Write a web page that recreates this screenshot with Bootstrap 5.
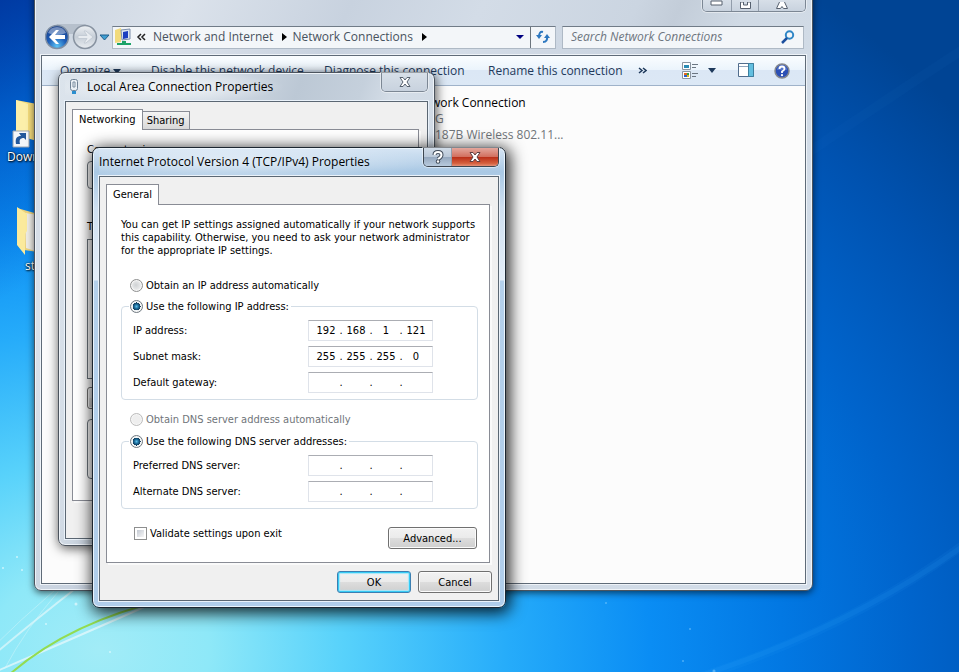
<!DOCTYPE html>
<html lang="en">
<head>
<meta charset="utf-8">
<meta name="viewport" content="width=device-width, initial-scale=1">
<title>Network Connections</title>
<link href="https://cdn.jsdelivr.net/npm/bootstrap@5.3.0/dist/css/bootstrap.min.css" rel="stylesheet">
<style>
body{font:12px/16px "Open Sans","Noto Sans",sans-serif;color:#000;margin:0}
.desktop{height:100vh;background:
 linear-gradient(150deg,rgba(0,45,150,.75) 0,rgba(0,60,170,.45) 100px,rgba(0,60,170,0) 260px),
 radial-gradient(ellipse 1100px 860px at 100px 650px,#a2ecf7 0,#8ee8f8 10%,#58d2fb 22%,#26acfa 37%,#0a8df4 50%,#0278e3 62%,#0064cc 74%,#0052b0 88%,#004494 100%)}
.wallpaper{position:absolute;inset:0;width:100%;height:100%}
.shortcut{position:absolute;color:#fff;text-shadow:1px 1px 2px #000,0 0 2px #000}
.win{position:absolute;border:1px solid #4c545e;border-radius:7px;background:#cbd5e1;box-shadow:inset 0 0 0 1px #eef3f8,0 2px 7px rgba(0,0,0,.6);padding:0 6px 6px}
.explorer{left:34px;right:146px;top:-30px;bottom:81px;background:linear-gradient(115deg,#c9d3df 0,#dbe2eb 150px,#c8d2df 300px,#d3dce7 420px,#cbd5e1 560px,#c3cdd9 600px,#d0dae5 660px,#d3dde9 100%)}
.props{left:58px;top:72px;width:377px;height:474px;background:linear-gradient(110deg,#dce4ec 0,#d3dce6 150px,#bcc8d5 230px,#c5d0dc 290px,#d4dde7 320px,#cad5e2 100%);box-shadow:inset 0 0 0 1px #eef3f8,1px 2px 12px rgba(0,0,0,.7)}
.ipv4{left:92px;top:147px;width:414px;height:461px;border-color:#1c2630;background:linear-gradient(#d6e5f4 0,#a9c8e4 24px,#cfe0f1 60px,#e4eef8 132px,#b4d0eb 133px,#b0cdea 100%);box-shadow:inset 0 0 0 1px #eaf4fc,2px 3px 16px 2px rgba(0,0,0,.85)}
.caption-row{height:28px}
.ipv4 .caption-row{background:radial-gradient(ellipse 200px 20px at 130px 14px,rgba(255,255,255,.55),rgba(255,255,255,0))}
.props .caption-row{background:radial-gradient(ellipse 120px 16px at 100px 14px,rgba(255,255,255,.7),rgba(255,255,255,0))}
.client{border:1px solid #5b6773;background:#f0f0f0;box-shadow:0 0 0 1px #eaf2fa}
.cap-btns{align-self:flex-start;border:1px solid #7c8794;border-top:0;border-radius:0 0 5px 5px;overflow:hidden;box-shadow:0 0 0 1px rgba(255,255,255,.45)}
.cap-btns button{border:0;padding:0;background:linear-gradient(#d7dfe8,#c8d2de);border-left:1px solid #929dab}
.cap-btns button:first-child{border-left:0}
.ipv4 .cap-btns{border-color:#3d4650}
.ipv4 .help{background:linear-gradient(#d0dbe7 0,#bac8d8 48%,#94a7bd 50%,#b8cadd 100%)}
.ipv4 .close{background:linear-gradient(#e3a79d 0,#d2705f 48%,#b92d17 50%,#d5603e 85%,#e59077 100%)}
.nav-row{height:30px;margin-bottom:3px;padding:0 2px 0 4px}
.address{background:#f3f6f9;border:1px solid #aeb9c5;border-top-color:#707b87;height:23px;color:#48525e}
.address a{color:inherit;text-decoration:none}
.search input{border:0;background:none;outline:0;font-style:italic;color:#6d757e;padding:0}
.search input::placeholder{color:#6d757e;opacity:1}
.plain{border:0;background:none;padding:0;line-height:16px;color:inherit}
.files{border:1px solid #5f6b78;background:#fcfcfc;box-shadow:0 0 0 1px #eef3f8}
.toolbar{height:30px;background:linear-gradient(#fafdff 0,#ebf4fc 48%,#dbe7f5 50%,#dce8f5 100%);border-bottom:1px solid #9fb2c9;color:#1e395b}
.results{padding:9px 0 0 389px}
.muted{color:#70757a}
.tabs button{border:1px solid #898c95;border-bottom:0;padding:0 6px;color:#000}
.tabs .on{background:#fff;height:21px;margin-bottom:-1px;position:relative;line-height:18px}
.tabs .off{background:linear-gradient(#f4f4f4,#d8d8d8);height:18px;margin-left:-1px;padding:0 4px;line-height:18px}
.pane{border:1px solid #898c95;background:#fff;box-shadow:2px 2px 0 #fafafa}
.dlg,.dlg button,.dlg input,.dlg label{font-family:"DejaVu Sans Condensed","DejaVu Sans",sans-serif;font-size:11px;line-height:13px}
.group{border:1px solid #d3dde6;border-radius:4px;padding:0 0 6px 7px;margin:0 11px 0 14px;min-width:0}
.group legend{float:none;width:auto;margin:0;padding:0 2px 0 1px;font-size:11px;line-height:14px}
.group legend,.choice{display:flex;align-items:center;gap:3px}
.fields{padding:7px 44px 0 4px;display:grid;gap:5px}
.ip{border:1px solid #dfe3ea;border-top-color:#abadb3;height:21px;padding:0 4px 0 5px;background:#fff}
.ip input{width:24px;border:0;padding:0;text-align:center;background:none;outline:0}
.ip span{width:6px;text-align:center}
input[type=radio],input[type=checkbox]{appearance:none;width:13px;height:13px;margin:0;flex:none}
input[type=radio]{border:1px solid #8e8f8f;border-radius:50%;background:radial-gradient(circle at 5px 5px,#cfd2d4,#f4f4f4 80%);box-shadow:inset 0 0 0 1px #f6f6f6}
input[type=radio]:checked{border-color:#6f7880;background:radial-gradient(circle at 50% 50%,#5cc0e8 0,#1f6f9e 2px,#0b3350 4px,#f0f4f6 4px)}
input[type=radio]:disabled{border-color:#bcbcbc;background:#eee}
input[type=checkbox]{border:1px solid #8e8f8f;background:linear-gradient(135deg,#c4cad3,#f6f6f6) content-box #f4f4f4;padding:2px}
.push{border:1px solid #707070;border-radius:3px;height:22px;width:74px;padding:0;background:linear-gradient(#f2f2f2 0,#ebebeb 49%,#dddddd 50%,#cfcfcf 100%);box-shadow:inset 0 0 0 1px #fbfbfb}
.push.primary{border-color:#3c7fb1;box-shadow:inset 0 0 0 1px #36cbf5,inset 0 0 1px 2px #a6e6f8}
.push.wide{width:89px}
</style>
</head>
<body>
<main class="desktop position-relative overflow-hidden">
<svg class="wallpaper" viewBox="0 0 959 672" preserveAspectRatio="none" aria-hidden="true">
 <g fill="none" stroke-linecap="round">
  <path d="M-10 674Q70 640 160 600" stroke="#e2f8fb" stroke-width="2" opacity=".8"/>
  <path d="M-10 658Q30 624 80 585" stroke="#e2f8fb" stroke-width="2" opacity=".7"/>
  <path d="M-10 650Q20 620 55 590M5 668Q25 630 58 592" stroke="#e2f8fb" opacity=".4"/>
  <path d="M10 674Q70 622 165 600" stroke="#93dc50" stroke-width="2"/>
  <path d="M690 680Q850 630 970 540" stroke="#3fb0ff" stroke-width="9" opacity=".07"/>
  <path d="M690 679Q850 629 970 541" stroke="#3fb0ff" stroke-width="5" opacity=".1"/>
  <path d="M812 150Q900 90 970 45" stroke="#3b8fe0" stroke-width="10" opacity=".04"/>
 </g>
 <g fill="#e5fbff" opacity=".75"><circle cx="76" cy="604" r="1.5"/><circle cx="46" cy="624" r="1"/><circle cx="22" cy="570" r="1"/><circle cx="3" cy="568" r="1"/><circle cx="110" cy="652" r="1"/><circle cx="17" cy="557" r="1"/></g>
 <g fill="#8fd4ff" opacity=".5"><circle cx="606" cy="603" r="1"/><circle cx="690" cy="629" r="1"/><circle cx="683" cy="661" r="1"/><circle cx="714" cy="671" r="1.500"/></g>
</svg>
<div class="shortcut" style="left:7px;top:99px">
 <svg class="d-block ms-1" width="40" height="50" aria-hidden="true"><path d="M5 1 26 5V42L5 36Z" fill="#f5dc7c"/><path d="M5 1 17 5V39L5 36Z" fill="#fcefaa"/><path d="M2 32h16v16H2Z" fill="#f4f6f9" stroke="#9aa4b0"/><path d="M5 45c-1-6 1-8 5-8l-2-3h7v7l-2-2c-4 0-5 2-4 6Z" fill="#23589c"/></svg>
 <div>Downloads</div>
</div>
<div class="shortcut" style="left:13px;top:206px">
 <svg class="d-block" width="40" height="52" aria-hidden="true"><path d="M4 2 25 8V46L11 44Z" fill="#ecd27c"/><path d="M12 7 25 9V46L13 42Z" fill="#eceae5"/><path d="M4 1 14 8V25L12 28V49L4 39Z" fill="#fbea9c"/></svg>
 <div class="ps-2 ms-1">st</div>
</div>

<section class="win explorer d-flex flex-column" aria-label="Network Connections">
 <header class="d-flex justify-content-end" style="height:51px;padding-top:29px">
  <div class="cap-btns d-flex">
   <button class="pb-1" style="width:28px;height:11px" aria-label="Minimize"><svg class="d-block mx-auto" width="14" height="7"><path d="M1 1h11v4H1Z" fill="#fff" stroke="#56606e"/></svg></button>
   <button style="width:27px;height:11px" aria-label="Maximize"><svg class="d-block mx-auto" width="13" height="8"><path d="M1.500 0v6.500h10V0h-3v3h-4V0Z" fill="#fff" stroke="#56606e"/></svg></button>
   <button style="width:47px;height:11px" aria-label="Close"><svg class="d-block mx-auto" width="14" height="8"><path d="M4.500 0 1.500 6.500h4l1.500-2 1.500 2h4L9.500 0" fill="#fff" stroke="#56606e"/></svg></button>
  </div>
 </header>
 <nav class="nav-row d-flex align-items-center">
  <svg width="67" height="30" class="flex-shrink-0" aria-hidden="true">
   <defs><radialGradient id="b" cx=".5" cy=".9" r=".9"><stop offset="0" stop-color="#5cc4f6"/><stop offset=".45" stop-color="#1f5fb8"/><stop offset="1" stop-color="#173c86"/></radialGradient><linearGradient id="f" x2="0" y2="1"><stop offset="0" stop-color="#eef1f4"/><stop offset=".5" stop-color="#c6ced7"/><stop offset="1" stop-color="#e9edf1"/></linearGradient></defs>
   <path d="M12 2H40q6 3 5 10H8Z" fill="#b6c0cc"/>
   <circle cx="12" cy="15" r="11.500" fill="url(#b)" stroke="#7f8fa4" stroke-width="1.500"/><path d="M3 11a9.500 9 0 0 1 18 0q-9 4-18 0Z" fill="#fff" opacity=".4"/>
   <path d="M4 15l7-7h3l-4 5h10v4H10l4 5h-3Z" fill="#fff"/>
   <circle cx="40" cy="15" r="11.500" fill="url(#f)" stroke="#8792a0" stroke-width="1.500"/><path d="M48 15l-7-6h-2l3 4.500h-9v3h9l-3 4.500h2Z" fill="#e8ecf0" stroke="#c4ccd5"/>
   <path d="M55 13h9l-4.500 5Z" fill="#3f9fd3" stroke="#1f5d8b"/>
  </svg>
  <div class="address d-flex align-items-center flex-grow-1">
   <svg width="20" height="19" class="flex-shrink-0" style="margin-left:2px" aria-hidden="true"><path d="M0 2 6 0V14L0 15Z" fill="#f2db7c"/><path d="M6 2 15 1V11L7 12Z" fill="#dce5f0" stroke="#7c8eaa"/><path d="M8 4l5-1v7l-5 1Z" fill="#1c3fc0"/><path d="M7 13h4v2h5v2H2v-2h5Z" fill="#1ca368"/></svg>
   <svg width="11" height="8" class="flex-shrink-0" style="margin:0 6px 0 1px" fill="none" stroke="#222" stroke-width="1.500" aria-hidden="true"><path d="M5 1 2 4l3 3M9 1 6 4l3 3"/></svg>
   <a href="#">Network and Internet</a><span class="mx-1 ps-1 text-black"><svg class="d-block" width="7" height="8"><path d="M1 0v8l5-4Z"/></svg></span>
   <a href="#">Network Connections</a><span class="mx-1 ps-1 text-black"><svg class="d-block" width="7" height="8"><path d="M1 0v8l5-4Z"/></svg></span>
   <button class="plain ms-auto me-1" aria-label="Previous locations"><svg width="12" height="6" class="d-block"><path d="M2 1h8L6 5Z" fill="#000080"/></svg></button>
   <button class="plain border-start border-secondary px-1 h-100" aria-label="Refresh"><svg class="d-block" width="16" height="16" fill="none" stroke="#2e78c0" stroke-width="2"><path d="M8 3Q4 2 4 8M8 13q5 0 4-6"/><path d="M1 6h6L4 10ZM9 9h6l-3-4Z" fill="#2e78c0" stroke="none"/></svg></button>
  </div>
  <div class="address search d-flex align-items-center px-2" style="margin-left:6px;width:242px">
   <input class="flex-grow-1" style="min-width:0" type="search" placeholder="Search Network Connections" aria-label="Search Network Connections">
   <svg width="14" height="14" fill="none" stroke="#2f86c6" stroke-width="2" aria-hidden="true"><circle cx="8.500" cy="5" r="3.700"/><path d="M6 8 1 13" stroke="#1c4f9e" stroke-width="2.500"/></svg>
  </div>
 </nav>
 <div class="files flex-grow-1">
  <div class="toolbar d-flex align-items-center text-nowrap" style="padding-left:18px">
   <button class="plain text-start" style="width:91px">Organize <svg width="8" height="5"><path d="M0 0h8L4 5Z" fill="#1e395b"/></svg></button>
   <button class="plain text-start" style="width:173px">Disable this network device</button>
   <button class="plain text-start" style="width:164px">Diagnose this connection</button>
   <button class="plain text-start" style="width:150px">Rename this connection</button>
   <button class="plain" aria-label="More commands"><svg class="d-block" width="9" height="7" fill="none" stroke="#1e395b" stroke-width="1.500"><path d="M1 1l3 2.500L1 6M5 1l3 2.500L5 6"/></svg></button>
   <div class="d-flex align-items-center ms-auto" style="padding-right:15px">
    <button class="plain" aria-label="Change view"><svg class="d-block" width="17" height="17"><path d="M.5.5h8v7h-8ZM.5 9.500h8v7h-8Z" fill="#fff" stroke="#8b949f"/><path d="M2 3h5v3H2Z" fill="#2a8bb4"/><path d="M2 11h3v2H2Z" fill="#e0661e"/><path d="M5 11h2v2H5Z" fill="#2d9e4a"/><path d="M2 13h3v2H2Z" fill="#2c5fc9"/><path d="M5 13h2v2H5Z" fill="#e3b51d"/><path d="M10 2.500h6M10 5.500h4M10 11.500h6M10 14.500h4" stroke="#6b7682"/></svg></button>
    <button class="plain" style="margin:0 22px 0 9px" aria-label="View options"><svg class="d-block" width="8" height="5"><path d="M0 0h8L4 5Z" fill="#1e395b"/></svg></button>
    <button class="plain me-3" aria-label="Preview pane"><svg class="d-block" width="20" height="15"><path d="M.5.5h15v13H.5Z" fill="#fff" stroke="#516d8d"/><path d="M1 3.500h10" stroke="#8fa5bd"/><path d="M10.500.5h5v13h-5Z" fill="#63bfe0" stroke="#3d7f9f"/></svg></button>
    <button class="plain" aria-label="Help"><svg class="d-block" width="16" height="16"><circle cx="8" cy="8" r="7" fill="#2b4fb5" stroke="#84878d" stroke-width="1.500"/><path d="M3 7a5 5 0 0 1 10 0Z" fill="#7d9be4" opacity=".5"/><path d="M5.500 6q0-2.500 2.500-2.500T10.500 6Q10.500 7 8 8.500V10" fill="none" stroke="#fff" stroke-width="1.800"/><circle cx="8" cy="12.200" r="1.100" fill="#fff"/></svg></button>
   </div>
  </div>
  <div class="results text-nowrap"><div>work Connection</div><div class="muted ps-1">G</div><div class="muted ps-1">187B Wireless 802.11...</div></div>
 </div>
</section>

<section class="win props d-flex flex-column" role="dialog" aria-label="Local Area Connection Properties">
 <header class="caption-row d-flex align-items-center">
  <svg width="14" height="18" class="ms-1 flex-shrink-0" aria-hidden="true"><rect x="1.500" y="1.500" width="7" height="11" rx="2" fill="#eaf0f5" stroke="#6f8295"/><path d="M4 4h2v5H4Z" fill="none" stroke="#7d8fa1"/><path d="M3 13h4v3H3Z" fill="#2b8fcf"/></svg>
  <span class="ms-1 flex-grow-1">Local Area Connection Properties</span>
  <div class="cap-btns d-flex"><button style="width:45px;height:18px" aria-label="Close"><svg class="d-block mx-auto" width="12" height="10"><path d="M1 .5h3l2 2.500 2-2.500h3L8 5l3 4.500H8L6 7 4 9.500H1L4 5Z" fill="#fff" stroke="#56606e"/></svg></button></div>
 </header>
 <div class="client dlg flex-grow-1 d-flex flex-column" style="padding:7px 8px 37px 6px">
  <div class="tabs d-flex align-items-end flex-shrink-0"><button class="on">Networking</button><button class="off">Sharing</button></div>
  <div class="pane flex-grow-1" style="padding:13px 14px">
   <div>Connect using:</div>
   <div class="border border-secondary rounded-1" style="height:28px;margin-top:5px"></div>
   <div style="margin-top:31px">T</div>
   <div class="border border-secondary" style="height:140px;margin-top:6px"></div>
   <div class="d-flex mt-2"><button class="push" aria-label="Install"></button></div>
   <div class="border border-secondary rounded-1" style="height:60px;margin-top:10px"></div>
  </div>
 </div>
</section>

<section class="win ipv4 d-flex flex-column" role="dialog" aria-label="Internet Protocol Version 4 (TCP/IPv4) Properties">
 <header class="caption-row d-flex align-items-center">
  <span class="flex-grow-1 text-nowrap">Internet Protocol Version 4 (TCP/IPv4) Properties</span>
  <div class="cap-btns d-flex"><button class="help" style="width:27px;height:18px" aria-label="Help"><svg class="d-block mx-auto" width="12" height="14"><path d="M2.500 5q0-3 3.500-3t3.500 3Q9.500 7 6 9" fill="none" stroke="#3f4a58" stroke-width="4"/><circle cx="6" cy="11.500" r="2.200" fill="#3f4a58"/><path d="M2.500 5q0-3 3.500-3t3.500 3Q9.500 7 6 9" fill="none" stroke="#fff" stroke-width="2"/><circle cx="6" cy="11.500" r="1.200" fill="#fff"/></svg></button><button class="close" style="width:47px;height:18px" aria-label="Close"><svg class="d-block mx-auto" width="12" height="10"><path d="M1 .5h3l2 2.500 2-2.500h3L8 5l3 4.500H8L6 7 4 9.500H1L4 5Z" fill="#fff" stroke="#5d3f42"/></svg></button></div>
 </header>
 <form class="client dlg flex-grow-1 d-flex flex-column" style="padding:7px 8px 7px 6px">
  <div class="tabs d-flex flex-shrink-0"><button type="button" class="on">General</button></div>
  <div class="pane flex-grow-1 d-flex flex-column">
   <p class="mb-0 text-nowrap" style="padding:13px 0 0 14px">You can get IP settings assigned automatically if your network supports<br>this capability. Otherwise, you need to ask your network administrator<br>for the appropriate IP settings.</p>
   <div class="choice" style="margin:22px 0 8px 23px"><input type="radio" name="ip" id="r1"><label for="r1">Obtain an IP address automatically</label></div>
   <fieldset class="group">
    <legend><input type="radio" name="ip" id="r2" checked><label for="r2">Use the following IP address:</label></legend>
    <div class="fields">
     <div class="d-flex align-items-center justify-content-between"><label for="a1">IP address:</label><div class="ip d-flex align-items-center"><input id="a1" value="192"><span>.</span><input aria-label="IP 2" value="168"><span>.</span><input aria-label="IP 3" value="1"><span>.</span><input aria-label="IP 4" value="121"></div></div>
     <div class="d-flex align-items-center justify-content-between"><label for="a2">Subnet mask:</label><div class="ip d-flex align-items-center"><input id="a2" value="255"><span>.</span><input aria-label="Mask 2" value="255"><span>.</span><input aria-label="Mask 3" value="255"><span>.</span><input aria-label="Mask 4" value="0"></div></div>
     <div class="d-flex align-items-center justify-content-between"><label for="a3">Default gateway:</label><div class="ip d-flex align-items-center"><input id="a3"><span>.</span><input aria-label="Gateway 2"><span>.</span><input aria-label="Gateway 3"><span>.</span><input aria-label="Gateway 4"></div></div>
    </div>
   </fieldset>
   <div class="choice muted" style="margin:13px 0 9px 23px"><input type="radio" name="dns" id="r3" disabled><label for="r3">Obtain DNS server address automatically</label></div>
   <fieldset class="group">
    <legend><input type="radio" name="dns" id="r4" checked><label for="r4">Use the following DNS server addresses:</label></legend>
    <div class="fields">
     <div class="d-flex align-items-center justify-content-between"><label for="a4">Preferred DNS server:</label><div class="ip d-flex align-items-center"><input id="a4"><span>.</span><input aria-label="Preferred 2"><span>.</span><input aria-label="Preferred 3"><span>.</span><input aria-label="Preferred 4"></div></div>
     <div class="d-flex align-items-center justify-content-between"><label for="a5">Alternate DNS server:</label><div class="ip d-flex align-items-center"><input id="a5"><span>.</span><input aria-label="Alternate 2"><span>.</span><input aria-label="Alternate 3"><span>.</span><input aria-label="Alternate 4"></div></div>
    </div>
   </fieldset>
   <div class="d-flex justify-content-between" style="padding:18px 12px 0 27px">
    <div class="choice align-self-start"><input type="checkbox" id="v"><label for="v">Validate settings upon exit</label></div>
    <button type="button" class="push wide">Advanced...</button>
   </div>
  </div>
  <div class="d-flex justify-content-end pt-2" style="gap:7px;margin-right:-2px"><button type="button" class="push primary">OK</button><button type="button" class="push">Cancel</button></div>
 </form>
</section>
</main>
<script src="https://cdn.jsdelivr.net/npm/bootstrap@5.3.0/dist/js/bootstrap.bundle.min.js"></script>
</body>
</html>
